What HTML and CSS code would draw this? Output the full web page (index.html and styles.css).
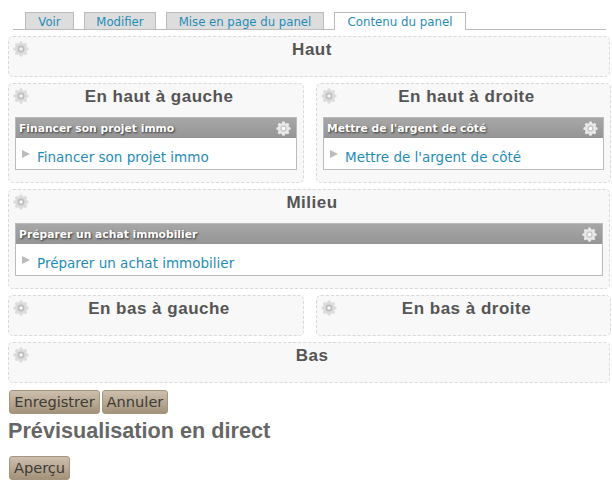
FILE: index.html
```html
<!DOCTYPE html>
<html lang="fr">
<head>
<meta charset="utf-8">
<title>Contenu du panel</title>
<link rel="stylesheet" href="styles.css">
</head>
<body>
<svg class="defs" width="0" height="0" aria-hidden="true">
  <symbol id="gear" viewBox="0 0 16 16">
    <g class="gear-body">
      <circle cx="8" cy="8" r="6"/>
      <circle cx="8" cy="2" r="1.7"/>
      <circle cx="12.3" cy="3.7" r="1.7"/>
      <circle cx="14" cy="8" r="1.7"/>
      <circle cx="12.3" cy="12.3" r="1.7"/>
      <circle cx="8" cy="14" r="1.7"/>
      <circle cx="3.7" cy="12.3" r="1.7"/>
      <circle cx="2" cy="8" r="1.7"/>
      <circle cx="3.7" cy="3.7" r="1.7"/>
    </g>
    <circle class="gear-ring" cx="8" cy="8" r="2.6"/>
  </symbol>
</svg>
<nav class="tabs">
  <a class="tab tab-view">Voir</a>
  <a class="tab tab-edit">Modifier</a>
  <a class="tab tab-layout">Mise en page du panel</a>
  <a class="tab tab-content active">Contenu du panel</a>
</nav>
<main class="panels">
  <section class="region">
    <svg class="gear"><use href="#gear"/></svg>
    <h2>Haut</h2>
  </section>
  <div class="columns">
    <section class="region filled">
      <svg class="gear"><use href="#gear"/></svg>
      <h2>En haut à gauche</h2>
      <article class="pane">
        <header><span>Financer son projet immo</span><svg class="gear light"><use href="#gear"/></svg></header>
        <div class="pane-body"><i class="arrow"></i><a>Financer son projet immo</a></div>
      </article>
    </section>
    <section class="region filled">
      <svg class="gear"><use href="#gear"/></svg>
      <h2>En haut à droite</h2>
      <article class="pane">
        <header><span>Mettre de l'argent de côté</span><svg class="gear light"><use href="#gear"/></svg></header>
        <div class="pane-body"><i class="arrow"></i><a>Mettre de l'argent de côté</a></div>
      </article>
    </section>
  </div>
  <section class="region filled">
    <svg class="gear"><use href="#gear"/></svg>
    <h2>Milieu</h2>
    <article class="pane">
      <header><span>Préparer un achat immobilier</span><svg class="gear light"><use href="#gear"/></svg></header>
      <div class="pane-body"><i class="arrow"></i><a>Préparer un achat immobilier</a></div>
    </article>
  </section>
  <div class="columns">
    <section class="region">
      <svg class="gear"><use href="#gear"/></svg>
      <h2>En bas à gauche</h2>
    </section>
    <section class="region">
      <svg class="gear"><use href="#gear"/></svg>
      <h2>En bas à droite</h2>
    </section>
  </div>
  <section class="region">
    <svg class="gear"><use href="#gear"/></svg>
    <h2>Bas</h2>
  </section>
</main>
<div class="actions">
  <button class="save">Enregistrer</button>
  <button class="cancel">Annuler</button>
</div>
<h1>Prévisualisation en direct</h1>
<div class="actions">
  <button class="preview">Aperçu</button>
</div>
</body>
</html>
```
FILE: styles.css
```css
* { box-sizing: border-box; }
body {
  margin: 0;
  padding: 12px 0 0 8px;
  width: 612px;
  height: 491px;
  overflow: hidden;
  background: #fff;
  font-family: "DejaVu Sans", Verdana, sans-serif;
}
.defs { display: block; }
.tabs {
  display: flex;
  gap: 10px;
  width: 593px;
  height: 18px;
  margin-left: 5px;
  padding-left: 12px;
  border-bottom: 1px solid #bbb;
}
.tab {
  height: 17px;
  border: 1px solid #bbb;
  border-bottom: 0;
  background: #ddd;
  color: #1f8cb8;
  font-size: 11.7px;
  line-height: 18px;
  text-align: center;
  white-space: nowrap;
}
.tab-view { width: 49px; }
.tab-edit { width: 72px; }
.tab-layout { width: 158px; }
.tab-content { width: 132px; font-size: 11.8px; }
.tab.active { height: 18px; background: #fff; }
.panels {
  display: grid;
  grid-template-columns: 602px;
  gap: 6px;
  width: 602px;
  margin-top: 6px;
}
.columns {
  display: grid;
  grid-template-columns: 296px 295px;
  gap: 12px;
}
.region {
  position: relative;
  height: 41px;
  padding: 0 6px;
  border: 1px dashed #d9d9d9;
  border-radius: 5px;
  background: #f8f8f8;
}
.region.filled { height: 100px; }
.region h2 {
  height: 33px;
  margin: 0;
  padding-left: 6px;
  color: #555;
  font: bold 17px/25px "Liberation Sans", Arial, sans-serif;
  letter-spacing: .5px;
  text-align: center;
}
.gear { width: 16px; height: 16px; }
.region > .gear { position: absolute; left: 4px; top: 4px; }
.gear-body { fill: #dcdcdc; }
.gear-ring { fill: #f4f4f4; stroke: #bdbdbd; stroke-width: 1.6; }
.gear.light { width: 15px; height: 15px; filter: brightness(1.06); }
.pane { height: 53px; border: 1px solid #bbb; background: #fff; }
.pane header {
  display: flex;
  align-items: center;
  justify-content: space-between;
  height: 20px;
  padding: 0 5px 0 3px;
  background: linear-gradient(#a7a7a7, #959595);
  color: #fff;
  font-size: 10.75px;
  font-weight: bold;
  text-shadow: 1px 1px 2px #333;
}
.pane-body {
  display: flex;
  align-items: flex-start;
  gap: 7px;
  padding: 10px 0 0 6px;
}
.arrow {
  width: 8px;
  height: 8px;
  margin-top: 2px;
  background: #bbb;
  clip-path: polygon(0 0, 100% 50%, 0 100%);
}
.pane-body a { color: #1f8cb8; font-size: 13.5px; line-height: 19px; }
.actions { display: flex; gap: 2px; padding-left: 1px; margin-top: 7px; }
button {
  height: 24px;
  padding: 0;
  border: 1px solid #a5957f;
  border-radius: 3px;
  background: linear-gradient(#cdbfae, #a4927a);
  color: #3b3b36;
  font: 14.6px/20px "DejaVu Sans", Verdana, sans-serif;
}
.save { width: 91px; }
.cancel { width: 66px; }
.preview { width: 61px; }
h1 {
  height: 35px;
  margin: 0;
  color: #666;
  font: bold 21.65px/33px "Liberation Sans", Arial, sans-serif;
}
```
